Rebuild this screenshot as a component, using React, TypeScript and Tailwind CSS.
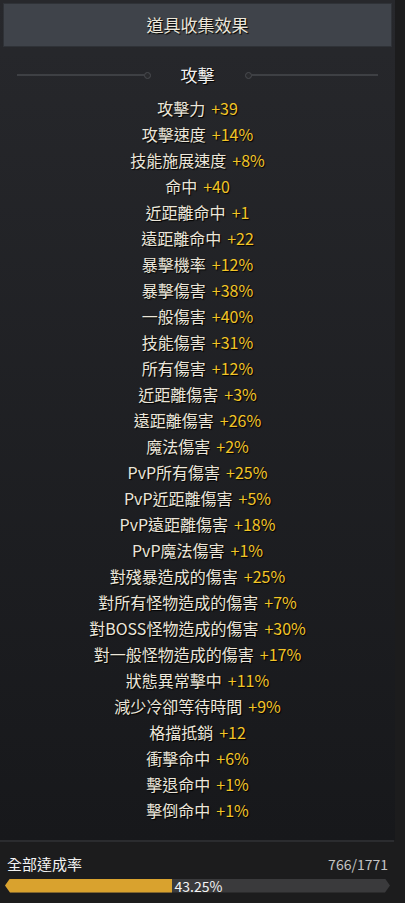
const stats: [string, string][] = [
  ["攻擊力", "+39"],
  ["攻擊速度", "+14%"],
  ["技能施展速度", "+8%"],
  ["命中", "+40"],
  ["近距離命中", "+1"],
  ["遠距離命中", "+22"],
  ["暴擊機率", "+12%"],
  ["暴擊傷害", "+38%"],
  ["一般傷害", "+40%"],
  ["技能傷害", "+31%"],
  ["所有傷害", "+12%"],
  ["近距離傷害", "+3%"],
  ["遠距離傷害", "+26%"],
  ["魔法傷害", "+2%"],
  ["PvP所有傷害", "+25%"],
  ["PvP近距離傷害", "+5%"],
  ["PvP遠距離傷害", "+18%"],
  ["PvP魔法傷害", "+1%"],
  ["對殘暴造成的傷害", "+25%"],
  ["對所有怪物造成的傷害", "+7%"],
  ["對BOSS怪物造成的傷害", "+30%"],
  ["對一般怪物造成的傷害", "+17%"],
  ["狀態異常擊中", "+11%"],
  ["減少冷卻等待時間", "+9%"],
  ["格擋抵銷", "+12"],
  ["衝擊命中", "+6%"],
  ["擊退命中", "+1%"],
  ["擊倒命中", "+1%"],
];

function Divider({ side }: { side: "left" | "right" }) {
  return (
    <div className={`flex flex-1 items-center ${side === "left" ? "" : "flex-row-reverse"}`}>
      <div className="h-[2px] flex-1 bg-[#3e4044]" />
      <div className="h-[7px] w-[7px] rounded-full border border-[#4a4c50] bg-[#2a2b2e]" />
    </div>
  );
}

export default function App() {
  const pct = 43.25;
  return (
    <div
      className="flex h-[903px] w-[405px] flex-col overflow-hidden bg-[#1c1c1d] text-[#ebe6da]"
      style={{ fontFamily: '"Noto Sans CJK TC", "Noto Sans", sans-serif' }}
    >
      <div className="flex h-[840px] w-[395px] flex-col bg-gradient-to-b from-[#27282c] to-[#17181b] p-[3px]">
        <div className="flex h-[44px] items-center justify-center border border-[#2f3237] bg-[#3f434a] text-[17px] [text-shadow:1px_1px_1px_#000]">
          道具收集效果
        </div>
        <div className="mt-[14px] flex h-[28px] items-center px-[14px]">
          <Divider side="left" />
          <div className="w-[94px] text-center text-[17px] text-[#f2f2f2] [text-shadow:1px_1px_1px_#000]">
            攻擊
          </div>
          <Divider side="right" />
        </div>
        <div className="mt-[6px] flex flex-col">
          {stats.map(([label, value]) => (
            <div
              key={label}
              className="flex h-[26px] items-center justify-center gap-[6px] text-[16px] leading-none [text-shadow:1px_1px_1px_#000]"
            >
              <span>{label}</span>
              <span className="text-[#f2c426]">{value}</span>
            </div>
          ))}
        </div>
      </div>
      <div className="h-[2px] w-[394px] bg-[#2b2c2f]" />
      <div className="flex w-[395px] flex-col px-[5px] pt-[11px]">
        <div className="flex items-center justify-between pl-[2px] pr-[2px]">
          <span className="text-[15px] text-[#f2f2f2]">全部達成率</span>
          <span className="text-[14px] text-[#c4c4c4]">766/1771</span>
        </div>
        <div className="relative mt-[3px] h-[14px] w-full bg-[#3a3a3c] [clip-path:polygon(5px_0,calc(100%-5px)_0,100%_50%,calc(100%-5px)_100%,5px_100%,0_50%)]">
          <div className="h-full bg-[#d9a22e]" style={{ width: `${(pct / 100) * 100}%` }} />
          <span
            className="absolute top-1/2 -translate-y-1/2 text-[14px] leading-none text-[#f4f4f4]"
            style={{ left: `calc(${pct}% + 3px)` }}
          >
            {pct.toFixed(2)}%
          </span>
        </div>
      </div>
    </div>
  );
}
